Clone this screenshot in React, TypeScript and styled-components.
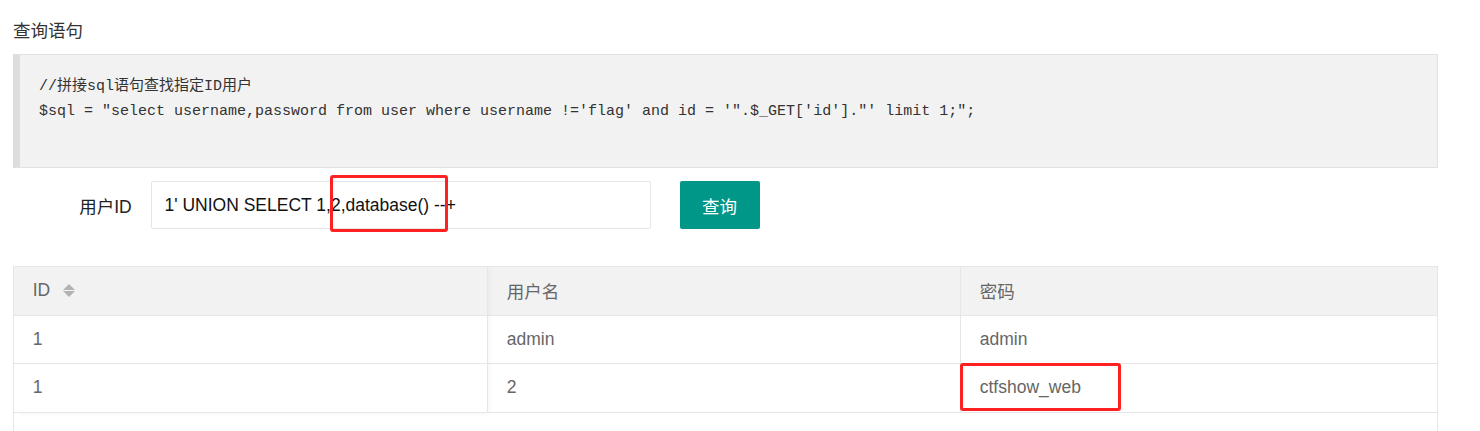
import styled, { createGlobalStyle } from 'styled-components'

//-----------------------------------------------------------------------------
// Data
//-----------------------------------------------------------------------------
const codeLines = [
  '//拼接sql语句查找指定ID用户',
  `$sql = "select username,password from user where username !='flag' and id = '".$_GET['id']."' limit 1;";`,
  ''
]

type Row = { id: string; username: string; password: string; marked?: boolean }

const rows: Row[] = [
  { id: '1', username: 'admin', password: 'admin' },
  { id: '1', username: '2', password: 'ctfshow_web', marked: true }
]

//-----------------------------------------------------------------------------
// Component
//-----------------------------------------------------------------------------
const App = (): JSX.Element => {
  return (
    <Page>
      <GlobalStyle />
      <Title>查询语句</Title>
      <CodeBlock>
        {codeLines.map((line, i) => (
          <CodeLine key={i}>{line || '\u00a0'}</CodeLine>
        ))}
      </CodeBlock>

      <FormRow>
        <Label>用户ID</Label>
        <InputWrap>
          <Input defaultValue="1' UNION SELECT 1,2,database() --+" />
          <Marker $left={179} $top={-6} $width={118} $height={57} />
        </InputWrap>
        <Button>查询</Button>
      </FormRow>

      <TableFrame>
        <FixedColumn>
          <Cell $head>
            ID
            <SortIcon>
              <Caret $up />
              <Caret />
            </SortIcon>
          </Cell>
          {rows.map((row, i) => (
            <Cell key={i}>{row.id}</Cell>
          ))}
        </FixedColumn>
        <MainColumns>
          <Cell $head $divider>用户名</Cell>
          <Cell $head>密码</Cell>
          {rows.map((row, i) => [
            <Cell key={`u${i}`} $divider>{row.username}</Cell>,
            <Cell key={`p${i}`}>
              {row.password}
              {row.marked && (
                <Marker $left={-1} $top={-1} $width={161} $height={48} />
              )}
            </Cell>
          ])}
        </MainColumns>
      </TableFrame>
    </Page>
  )
}

//-----------------------------------------------------------------------------
// Styled Components
//-----------------------------------------------------------------------------
const GlobalStyle = createGlobalStyle`
  body {
    margin: 0;
    background: #fff;
    font-family: "Liberation Sans", Arial, "Noto Sans CJK SC", sans-serif;
    color: #333;
  }
`
const Page = styled.div`
  width: 1425px;
  padding-left: 13px;
  overflow: hidden;
  height: 431px;
`
const Title = styled.h2`
  margin: 0;
  padding-top: 19px;
  font-size: 17.5px;
  line-height: 24px;
  font-weight: normal;
  color: #333;
`
const CodeBlock = styled.pre`
  margin: 11px 0 0;
  padding: 18.5px 0 18.5px 19px;
  border: 1px solid #e2e2e2;
  border-left: 7px solid #dddddd;
  background: #f2f2f2;
  color: #333;
  font-family: "Liberation Mono", "Courier New", "Noto Sans CJK SC", monospace;
  font-size: 15px;
  line-height: 25px;
`
const CodeLine = styled.div`
  white-space: pre;
`
const FormRow = styled.div`
  display: flex;
  align-items: center;
  margin-top: 13px;
  height: 48px;
`
const Label = styled.label`
  box-sizing: border-box;
  width: 137.5px;
  padding: 0 18.75px;
  text-align: right;
  font-size: 17.5px;
  color: #222;
`
const InputWrap = styled.div`
  position: relative;
`
const Input = styled.input`
  box-sizing: border-box;
  display: block;
  width: 500px;
  height: 48px;
  padding: 0 13px;
  border: 1px solid #e6e6e6;
  border-radius: 2px;
  font-family: inherit;
  font-size: 17.5px;
  color: #111;
  outline: none;
`
const Button = styled.button`
  margin-left: 29px;
  width: 80px;
  height: 48px;
  border: none;
  border-radius: 2px;
  background: #009688;
  color: #fff;
  font-family: "Noto Sans CJK SC", sans-serif;
  font-size: 17.5px;
  cursor: pointer;
`
const Marker = styled.div<{
  $left: number
  $top: number
  $width: number
  $height: number
}>`
  position: absolute;
  left: ${(p) => p.$left}px;
  top: ${(p) => p.$top}px;
  width: ${(p) => p.$width}px;
  height: ${(p) => p.$height}px;
  box-sizing: border-box;
  border: 3px solid #fd2121;
  border-radius: 3px;
  pointer-events: none;
  z-index: 3;
`
const TableFrame = styled.div`
  display: flex;
  align-items: flex-start;
  margin-top: 37px;
  min-height: 240px;
  border: 1px solid #e6e6e6;
  background: #fff;
`
const FixedColumn = styled.div`
  position: relative;
  z-index: 1;
  flex: none;
  width: 474px;
  box-sizing: border-box;
  border-right: 1px solid #e6e6e6;
  background: #fff;
  box-shadow: 3px 2px 6px -2px rgba(0, 0, 0, 0.05);
`
const MainColumns = styled.div`
  flex: 1;
  display: grid;
  grid-template-columns: 473px 1fr;
`
const Cell = styled.div<{ $head?: boolean; $divider?: boolean }>`
  position: relative;
  display: flex;
  align-items: center;
  height: 47.5px;
  padding: 0 18.75px;
  border-bottom: 1px solid #e6e6e6;
  border-right: ${(p) => (p.$divider ? '1px solid #e6e6e6' : 'none')};
  background: ${(p) => (p.$head ? '#f2f2f2' : '#fff')};
  color: #666;
  font-size: 17.5px;
`
const SortIcon = styled.span`
  display: inline-flex;
  flex-direction: column;
  gap: 1px;
  margin-left: 13px;
`
const Caret = styled.span<{ $up?: boolean }>`
  width: 0;
  height: 0;
  border: 6px solid transparent;
  ${(p) =>
    p.$up
      ? 'border-bottom-color: #b2b2b2; border-top-width: 0;'
      : 'border-top-color: #b2b2b2; border-bottom-width: 0;'}
`

export default App
